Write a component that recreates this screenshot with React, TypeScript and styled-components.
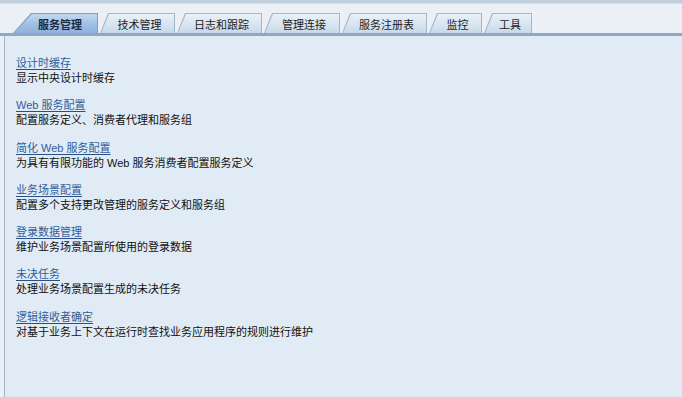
import * as React from 'react';
import styled, { createGlobalStyle } from 'styled-components';

const GlobalStyle = createGlobalStyle`
  html, body {
    margin: 0;
    padding: 0;
    height: 100%;
    background: #eaf0f6;
  }
  #root {
    height: 100%;
  }
  * {
    box-sizing: border-box;
  }
`;

const Page = styled.div`
  height: 100vh;
  display: flex;
  flex-direction: column;
  font-family: "Liberation Sans", "Noto Sans CJK SC", sans-serif;
  font-size: 11px;
  overflow: hidden;
`;

const TopBand = styled.div`
  height: 4px;
  background: #c1cedb;
  border-bottom: 1px solid #d6dfe8;
`;

const TabStrip = styled.div`
  display: flex;
  align-items: flex-end;
  gap: 2px;
  height: 32px;
  padding-left: 13px;
  background: #eaf0f6;
  border-bottom: 3px solid #8ea8c5;
`;

interface TabProps {
  $active?: boolean;
  $width: number;
  $chamfer: number;
}

const TabOuter = styled.div<TabProps>`
  width: ${p => p.$width}px;
  height: 20px;
  padding: 1px 1px 0 1px;
  background: ${p => (p.$active ? '#7f9fc4' : '#a3b6ca')};
  clip-path: polygon(${p => p.$chamfer}px 0, 100% 0, 100% 100%, 0 100%);
`;

const TabInner = styled.div<TabProps>`
  height: 100%;
  display: flex;
  align-items: center;
  justify-content: center;
  padding-left: ${p => Math.round(p.$chamfer / 2)}px;
  background: ${p =>
    p.$active
      ? 'linear-gradient(#c3d8ef, #9dbde3 60%, #8fb2dc)'
      : 'linear-gradient(#eaf1f8, #d8e4f0 55%, #c9d9e9)'};
  clip-path: polygon(${p => p.$chamfer}px 0, 100% 0, 100% 100%, 0 100%);
  color: ${p => (p.$active ? '#1b2a3e' : '#1e1e1e')};
  font-weight: ${p => (p.$active ? 'bold' : 'normal')};
  white-space: nowrap;
`;

const Body = styled.div`
  flex: 1;
  padding-left: 4px;
  background: #eaf0f6;
  display: flex;
`;

const Content = styled.div`
  flex: 1;
  background: #e1ebf5;
  border-left: 1px solid #a3b6ca;
  padding: 20px 11px;
  display: flex;
  flex-direction: column;
  gap: 12.3px;
`;

const Item = styled.div`
  display: flex;
  flex-direction: column;
  align-items: flex-start;
  line-height: 15px;
`;

const ItemLink = styled.a`
  color: #2f5e9c;
  text-decoration: underline;
  text-decoration-color: #2a4f86;
  text-underline-offset: 2px;
  cursor: pointer;
`;

const ItemText = styled.div`
  color: #111;
`;

const tabs = [
  { label: '服务管理', width: 85, active: true },
  { label: '技术管理', width: 75 },
  { label: '日志和跟踪', width: 85 },
  { label: '管理连接', width: 76 },
  { label: '服务注册表', width: 85 },
  { label: '监控', width: 53 },
  { label: '工具', width: 48 },
];

const items = [
  { title: '设计时缓存', text: '显示中央设计时缓存' },
  { title: 'Web 服务配置', text: '配置服务定义、消费者代理和服务组' },
  { title: '简化 Web 服务配置', text: '为具有有限功能的 Web 服务消费者配置服务定义' },
  { title: '业务场景配置', text: '配置多个支持更改管理的服务定义和服务组' },
  { title: '登录数据管理', text: '维护业务场景配置所使用的登录数据' },
  { title: '未决任务', text: '处理业务场景配置生成的未决任务' },
  { title: '逻辑接收者确定', text: '对基于业务上下文在运行时查找业务应用程序的规则进行维护' },
];

const App: React.FunctionComponent = () => {
  return (
    <Page>
      <GlobalStyle />
      <TopBand />
      <TabStrip>
        {tabs.map(t => {
          const chamfer = t.active ? 18 : 8;
          return (
            <TabOuter key={t.label} $active={t.active} $width={t.width} $chamfer={chamfer}>
              <TabInner $active={t.active} $width={t.width} $chamfer={chamfer}>
                {t.label}
              </TabInner>
            </TabOuter>
          );
        })}
      </TabStrip>
      <Body>
        <Content>
          {items.map(i => (
            <Item key={i.title}>
              <ItemLink>{i.title}</ItemLink>
              <ItemText>{i.text}</ItemText>
            </Item>
          ))}
        </Content>
      </Body>
    </Page>
  );
};

export default App;
